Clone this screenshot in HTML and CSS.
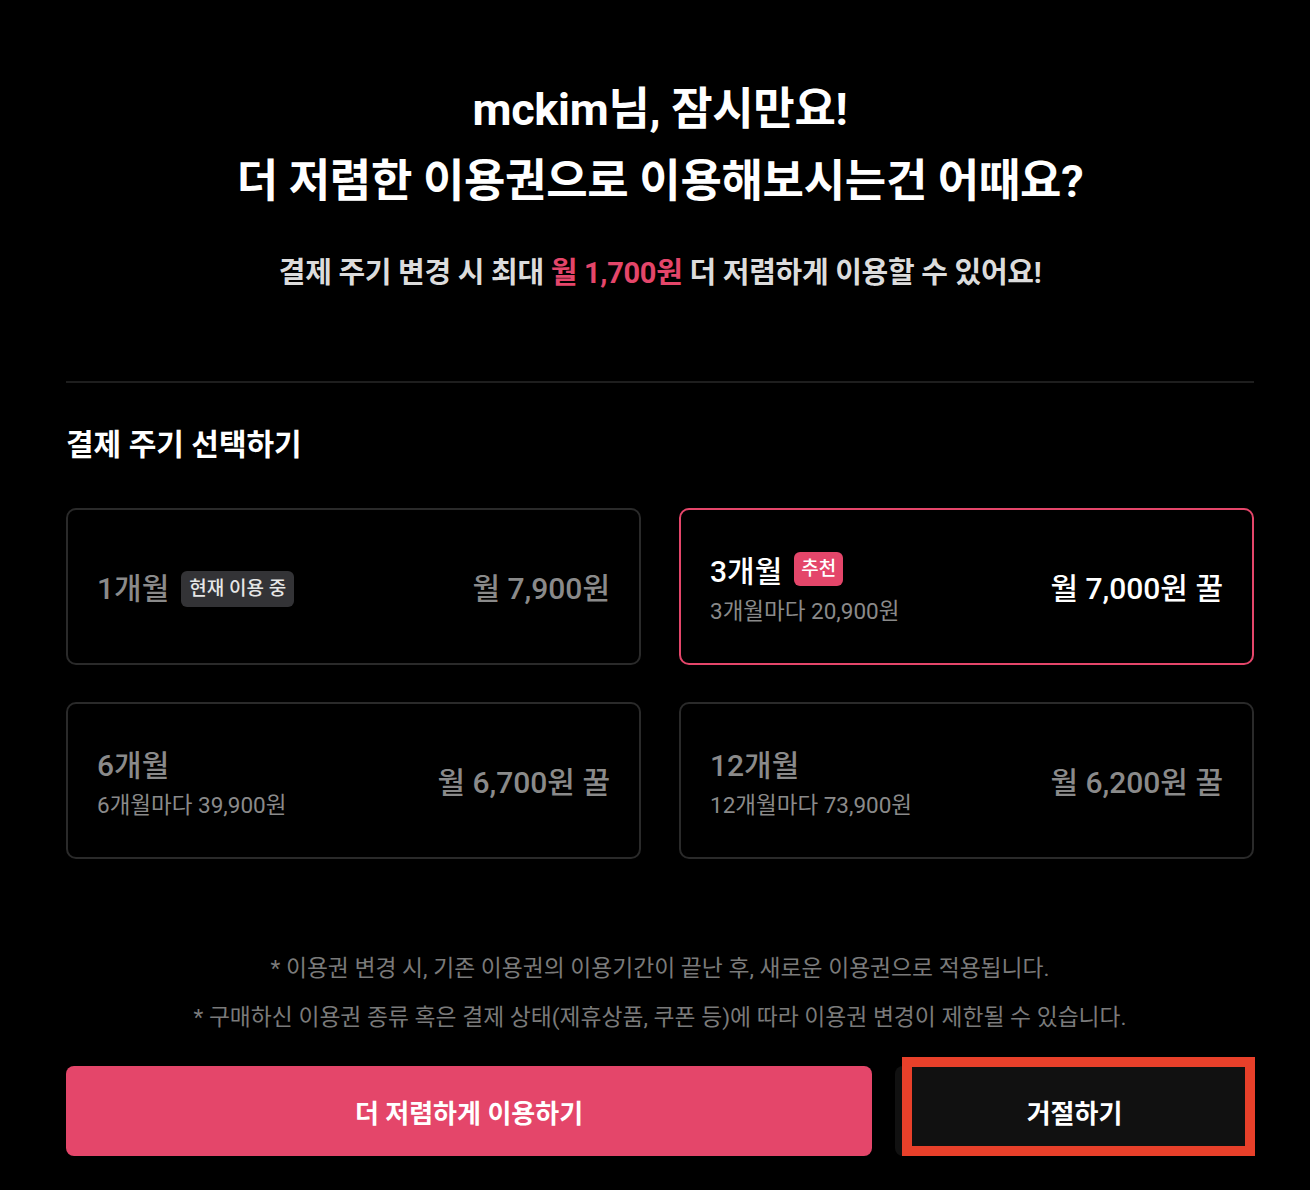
FILE: index.html
```html
<!DOCTYPE html>
<html lang="ko">
<head>
<meta charset="utf-8">
<title>이용권 변경</title>
<link rel="stylesheet" href="styles.css">
</head>
<body>
<main class="page">
  <header class="hero">
    <h1 class="hero-title">mckim님, 잠시만요!<br>더 저렴한 이용권으로 이용해보시는건 어때요?</h1>
    <p class="hero-sub">결제 주기 변경 시 최대 <span class="accent">월 1,700원</span> 더 저렴하게 이용할 수 있어요!</p>
  </header>
  <hr class="divider">
  <h2 class="section-title">결제 주기 선택하기</h2>
  <div class="plans">
    <div class="plan">
      <div class="plan-info">
        <div class="plan-head"><span class="plan-name">1개월</span><span class="badge badge-current">현재 이용 중</span></div>
      </div>
      <div class="plan-price">월 7,900원</div>
    </div>
    <div class="plan plan-selected">
      <div class="plan-info">
        <div class="plan-head"><span class="plan-name">3개월</span><span class="badge badge-rec">추천</span></div>
        <div class="plan-total">3개월마다 20,900원</div>
      </div>
      <div class="plan-price">월 7,000원 꿀</div>
    </div>
    <div class="plan">
      <div class="plan-info">
        <div class="plan-head"><span class="plan-name">6개월</span></div>
        <div class="plan-total">6개월마다 39,900원</div>
      </div>
      <div class="plan-price">월 6,700원 꿀</div>
    </div>
    <div class="plan">
      <div class="plan-info">
        <div class="plan-head"><span class="plan-name">12개월</span></div>
        <div class="plan-total">12개월마다 73,900원</div>
      </div>
      <div class="plan-price">월 6,200원 꿀</div>
    </div>
  </div>
  <div class="notes">
    <p class="note">* 이용권 변경 시, 기존 이용권의 이용기간이 끝난 후, 새로운 이용권으로 적용됩니다.</p>
    <p class="note">* 구매하신 이용권 종류 혹은 결제 상태(제휴상품, 쿠폰 등)에 따라 이용권 변경이 제한될 수 있습니다.</p>
  </div>
  <div class="actions">
    <button class="btn btn-primary">더 저렴하게 이용하기</button>
    <div class="btn-wrap">
      <button class="btn btn-dark">거절하기</button>
      <span class="highlight"></span>
    </div>
  </div>
</main>
</body>
</html>
```
FILE: styles.css
```css
* { box-sizing: border-box; }
html, body { margin: 0; padding: 0; background: #000; }
body {
  font-family: Roboto, "Noto Sans CJK KR", sans-serif;
  color: #fff;
  height: 1190px;
  overflow: hidden;
}
.page {
  padding: 74px 56px 0 66px;
}
.hero { text-align: center; }
.hero-title {
  margin: 0;
  font-size: 45px;
  line-height: 72px;
  font-weight: 700;
  letter-spacing: -0.3px;
  color: #fff;
}
.hero-sub {
  margin: 37px 0 0;
  font-size: 29px;
  line-height: 36px;
  font-weight: 700;
  color: #dcdcdc;
  letter-spacing: -0.3px;
}
.accent { color: #e4466a; }
.divider {
  margin: 90px 0 0;
  border: 0;
  height: 2px;
  background: #1e1e1e;
}
.section-title {
  margin: 42px 0 0;
  font-size: 30px;
  line-height: 40px;
  font-weight: 700;
  color: #fff;
}
.plans {
  margin-top: 43px;
  display: grid;
  grid-template-columns: 1fr 1fr;
  grid-auto-rows: 157px;
  gap: 37px 38px;
}
.plan {
  border: 2px solid #2a2a2a;
  border-radius: 10px;
  padding: 5px 29px 0 29px;
  display: flex;
  align-items: center;
  justify-content: space-between;
}
.plan-selected { border-color: #e4466a; }
.plan-head { display: flex; align-items: center; }
.plan-name {
  font-size: 30px;
  line-height: 38px;
  font-weight: 500;
  color: #8a8a8a;
}
.plan-selected .plan-name { color: #fff; }
.badge {
  margin-left: 12px;
  font-size: 19px;
  font-weight: 500;
  border-radius: 6px;
  line-height: 24px;
}
.badge-current {
  background: #333336;
  color: #e6e6e6;
  padding: 6px 8px;
}
.badge-rec {
  background: #e4466a;
  color: #fff;
  padding: 5px 7px;
  margin-top: -6px;
}
.plan-total {
  margin-top: 5px;
  font-size: 22.5px;
  line-height: 30px;
  color: #8a8a8a;
}
.plan-price {
  font-size: 30px;
  line-height: 40px;
  font-weight: 500;
  color: #8a8a8a;
}
.plan-selected .plan-price { color: #fff; }
.notes {
  margin-top: 95px;
  text-align: center;
}
.note {
  margin: 0;
  font-size: 22.8px;
  line-height: 30px;
  color: #7a7a7a;
}
.note + .note { margin-top: 19px; }
.actions {
  margin-top: 33px;
  display: grid;
  grid-template-columns: 806px 1fr;
  gap: 23px;
  height: 90px;
}
.btn {
  border: 0;
  border-radius: 8px;
  font-family: inherit;
  font-size: 26px;
  font-weight: 700;
  color: #fff;
  height: 90px;
  width: 100%;
}
.btn-primary { background: #e4466a; }
.btn-wrap { position: relative; }
.btn-dark { background: #111; }
.highlight {
  position: absolute;
  top: -9px;
  left: 7px;
  right: -1px;
  bottom: 0;
  border: 10px solid #e8402a;
  pointer-events: none;
}
```
